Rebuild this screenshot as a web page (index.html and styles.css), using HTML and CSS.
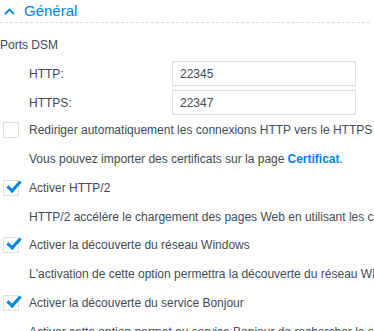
FILE: index.html
```html
<!DOCTYPE html>
<html lang="fr">
  <head>
    <meta charset="UTF-8" />
    <title>Général</title>
    <link rel="stylesheet" href="styles.css">
  </head>
  <body>
    <div class="panel">
      <div class="section-head">
        <svg class="chevron" width="11" height="7" viewBox="0 0 11 7" fill="none" stroke="currentColor" stroke-width="1.8">
          <path d="M1 6L5.5 1.5 10 6"/>
        </svg>
        <span class="section-title">Général</span>
      </div>

      <div class="group-title">Ports DSM</div>

      <div class="field">
        <label class="field-label">HTTP:</label>
        <input class="field-input" type="text" value="22345">
      </div>
      <div class="field">
        <label class="field-label">HTTPS:</label>
        <input class="field-input" type="text" value="22347">
      </div>

      <div class="options">
        <div class="check-row">
          <span class="check"></span>
          <span class="check-text">Rediriger automatiquement les connexions HTTP vers le HTTPS</span>
        </div>
        <div class="note">Vous pouvez importer des certificats sur la page <a class="link" href="#">Certificat</a>.</div>

        <div class="check-row">
          <span class="check checked"></span>
          <span class="check-text">Activer HTTP/2</span>
        </div>
        <div class="note">HTTP/2 accélère le chargement des pages Web en utilisant les connexions multiplexées.</div>

        <div class="check-row">
          <span class="check checked"></span>
          <span class="check-text">Activer la découverte du réseau Windows</span>
        </div>
        <div class="note">L'activation de cette option permettra la découverte du réseau Windows.</div>

        <div class="check-row">
          <span class="check checked"></span>
          <span class="check-text">Activer la découverte du service Bonjour</span>
        </div>
        <div class="note">Activer cette option permet au service Bonjour de rechercher le serveur.</div>
      </div>
    </div>
  </body>
</html>
```

FILE: styles.css
```css
:root {
  --blue: #0086e5;
  --text: #414b55;
  --border: #d7e1e6;
}

html,
body {
  margin: 0;
  padding: 0;
  background: #fff;
  overflow: hidden;
}

.panel {
  font-family: "Liberation Sans", Arial, sans-serif;
  font-size: 12px;
  color: var(--text);
  white-space: nowrap;
}

.section-head {
  display: flex;
  align-items: center;
  height: 22px;
  border-bottom: 1px dashed #d3dde3;
  margin-right: 4px;
}

.chevron {
  color: var(--blue);
  margin: 0 9px 0 4px;
}

.section-title {
  font-size: 15px;
  color: var(--blue);
  padding-bottom: 2px;
}

.group-title {
  padding-top: 15px;
  height: 23px;
}

.field {
  display: flex;
  align-items: center;
  height: 25px;
  padding-left: 29px;
}

.field + .field {
  margin-top: 4px;
}

.field-label {
  width: 143px;
}

.field-input {
  box-sizing: border-box;
  width: 184px;
  height: 25px;
  margin: 0;
  border: 1px solid var(--border);
  padding: 0 7px;
  font: inherit;
  color: var(--text);
  outline: none;
}

.options {
  padding-top: 1px;
}

.check-row,
.note {
  display: flex;
  align-items: center;
  height: 28.75px;
}

.check-row {
  padding-left: 3px;
}

.note {
  padding-left: 29px;
}

.check {
  box-sizing: border-box;
  position: relative;
  flex: none;
  width: 16px;
  height: 16px;
  border: 1px solid var(--border);
  margin-right: 10px;
}

.check.checked::after {
  content: "";
  position: absolute;
  left: 3px;
  top: 0;
  width: 11px;
  height: 5px;
  border-left: 3px solid var(--blue);
  border-bottom: 3px solid var(--blue);
  transform: rotate(-48deg);
}

.link {
  color: var(--blue);
  font-weight: bold;
  text-decoration: none;
  margin-left: 3px;
}
```
